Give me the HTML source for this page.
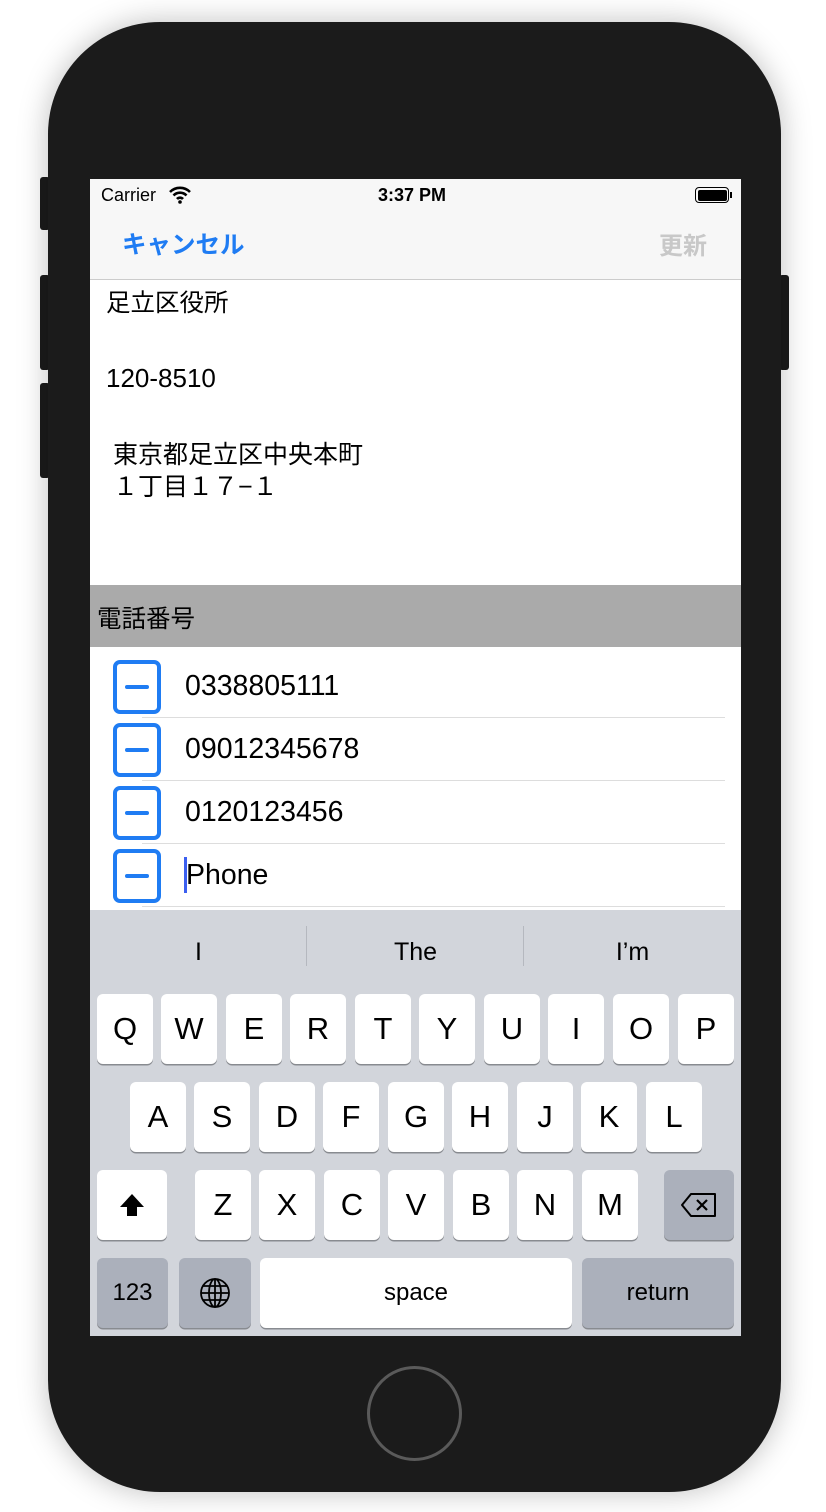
<!DOCTYPE html>
<html><head><meta charset="utf-8"><style>
*{margin:0;padding:0;box-sizing:border-box}
body{width:826px;height:1512px;background:#fff;position:relative;overflow:hidden;font-family:"Liberation Sans","Noto Sans CJK JP",sans-serif}
.phone{position:absolute;left:48px;top:22px;width:733px;height:1470px;background:#1b1b1b;border-radius:112px;box-shadow:0 0 30px rgba(0,0,0,.25)}
.btn{position:absolute;background:#1b1b1b;width:10px;border-radius:3px}
.screen{position:absolute;left:90px;top:179px;width:651px;height:1157px;background:#fff;overflow:hidden}
.abs{position:absolute}
.key{position:absolute;background:#fff;border-radius:6px;box-shadow:0 1.5px 0 #888b90;font-size:31px;text-align:center;line-height:70px;height:70px;width:56px;color:#000}
.dk{background:#abb0bb}
.row{position:absolute;left:0;width:651px;height:63px}
.mi{position:absolute;left:23px;top:5px;width:48px;height:54px;border:4px solid #1f7cf3;border-radius:7px}
.mi:after{content:"";position:absolute;left:8px;right:8px;top:21px;height:4px;background:#1f7cf3;border-radius:2px}
.num{position:absolute;left:95px;top:15px;font-size:28.5px}
.sep{position:absolute;left:52px;right:16px;bottom:0;height:1px;background:#ddd}
</style></head><body>
<div class="btn" style="left:40px;top:177px;height:53px"></div>
<div class="btn" style="left:40px;top:275px;height:95px"></div>
<div class="btn" style="left:40px;top:383px;height:95px"></div>
<div class="btn" style="left:779px;top:275px;height:95px"></div>
<div class="phone"></div>
<div class="abs" style="left:367px;top:1366px;width:95px;height:95px;border-radius:50%;border:3px solid #5a5a5a"></div>
<div class="screen">
 <div class="abs" style="left:0;top:0;width:651px;height:101px;background:#f7f7f7;border-bottom:1px solid #ccc"></div>
 <div class="abs" style="left:11px;top:6px;font-size:18px">Carrier</div>
 <svg class="abs" style="left:78px;top:7px" width="24" height="18" viewBox="0 0 24 18"><path d="M2 6a14 14 0 0 1 20 0M5.5 9.5a9 9 0 0 1 13 0M9 13a4 4 0 0 1 6 0" stroke="#000" stroke-width="2.6" fill="none"/><circle cx="12" cy="16" r="1.8"/></svg>
 <div class="abs" style="left:288px;top:6px;font-size:18px;font-weight:bold">3:37 PM</div>
 <div class="abs" style="left:605px;top:8px;width:34px;height:16px;border:1.5px solid #000;border-radius:4px;padding:1.5px"><div style="background:#000;width:100%;height:100%;border-radius:2px"></div></div>
 <div class="abs" style="left:640px;top:13px;width:2px;height:6px;background:#000"></div>
 <div class="abs" style="left:32px;top:47px;font-size:24.5px;font-weight:bold;color:#1f7cf3">キャンセル</div>
 <div class="abs" style="left:569px;top:47px;font-size:24px;font-weight:bold;color:#c8c8c8">更新</div>
 <div class="abs" style="left:16px;top:105px;font-size:24.5px">足立区役所</div>
 <div class="abs" style="left:16px;top:184px;font-size:26px">120-8510</div>
 <div class="abs" style="left:23px;top:260px;font-size:25px;line-height:32px">東京都足立区中央本町<br>１丁目１７−１</div>
 <div class="abs" style="left:0;top:406px;width:651px;height:62px;background:#aaa"></div>
 <div class="abs" style="left:7px;top:421px;font-size:24.5px">電話番号</div>
 <div class="row" style="top:476px"><div class="mi"></div><div class="num">0338805111</div><div class="sep"></div></div>
 <div class="row" style="top:539px"><div class="mi"></div><div class="num">09012345678</div><div class="sep"></div></div>
 <div class="row" style="top:602px"><div class="mi"></div><div class="num">0120123456</div><div class="sep"></div></div>
 <div class="row" style="top:665px"><div class="mi"></div><div class="abs" style="left:94px;top:13px;width:3px;height:36px;background:#3b5ff0"></div><div class="num" style="left:96px">Phone</div><div class="sep"></div></div>
 <div class="abs" style="left:0;top:731px;width:651px;height:426px;background:#d2d5db">
  <div class="abs" style="left:0;top:28px;width:217px;text-align:center;font-size:25px">I</div>
  <div class="abs" style="left:216px;top:16px;width:1px;height:40px;background:#b5b8bf"></div>
  <div class="abs" style="left:217px;top:28px;width:217px;text-align:center;font-size:25px">The</div>
  <div class="abs" style="left:433px;top:16px;width:1px;height:40px;background:#b5b8bf"></div>
  <div class="abs" style="left:434px;top:28px;width:217px;text-align:center;font-size:25px">I’m</div>
 </div>
 <div class="key" style="left:7px;top:815px">Q</div><div class="key" style="left:71px;top:815px">W</div><div class="key" style="left:136px;top:815px">E</div><div class="key" style="left:200px;top:815px">R</div><div class="key" style="left:265px;top:815px">T</div><div class="key" style="left:329px;top:815px">Y</div><div class="key" style="left:394px;top:815px">U</div><div class="key" style="left:458px;top:815px">I</div><div class="key" style="left:523px;top:815px">O</div><div class="key" style="left:588px;top:815px">P</div>
 <div class="key" style="left:40px;top:903px">A</div><div class="key" style="left:104px;top:903px">S</div><div class="key" style="left:169px;top:903px">D</div><div class="key" style="left:233px;top:903px">F</div><div class="key" style="left:298px;top:903px">G</div><div class="key" style="left:362px;top:903px">H</div><div class="key" style="left:427px;top:903px">J</div><div class="key" style="left:491px;top:903px">K</div><div class="key" style="left:556px;top:903px">L</div>
 <div class="key" style="left:7px;top:991px;width:70px"><svg width="30" height="26" viewBox="0 0 30 26" style="margin-top:22px"><path d="M15 2L3 15h7v9h10v-9h7z" fill="#000"/></svg></div>
 <div class="key" style="left:105px;top:991px">Z</div><div class="key" style="left:169px;top:991px">X</div><div class="key" style="left:234px;top:991px">C</div><div class="key" style="left:298px;top:991px">V</div><div class="key" style="left:363px;top:991px">B</div><div class="key" style="left:427px;top:991px">N</div><div class="key" style="left:492px;top:991px">M</div>
 <div class="key dk" style="left:574px;top:991px;width:70px"><svg width="38" height="26" viewBox="0 0 38 26" style="margin-top:22px"><path d="M11 2h24v22H11L2 13z" fill="none" stroke="#000" stroke-width="2" stroke-linejoin="round"/><path d="M17 8l10 10M27 8L17 18" stroke="#000" stroke-width="2.2"/></svg></div>
 <div class="key dk" style="left:7px;top:1079px;width:71px;font-size:24px">123</div>
 <div class="key dk" style="left:89px;top:1079px;width:72px"><svg width="32" height="32" viewBox="0 0 32 32" style="margin-top:19px" fill="none" stroke="#000" stroke-width="1.8"><circle cx="16" cy="16" r="14"/><ellipse cx="16" cy="16" rx="6" ry="14"/><path d="M2 16h28M4 9h24M4 23h24M16 2v28"/></svg></div>
 <div class="key" style="left:170px;top:1079px;width:312px;font-size:24px">space</div>
 <div class="key dk" style="left:492px;top:1079px;width:152px;font-size:24px">return</div>
</div>
</body></html>
